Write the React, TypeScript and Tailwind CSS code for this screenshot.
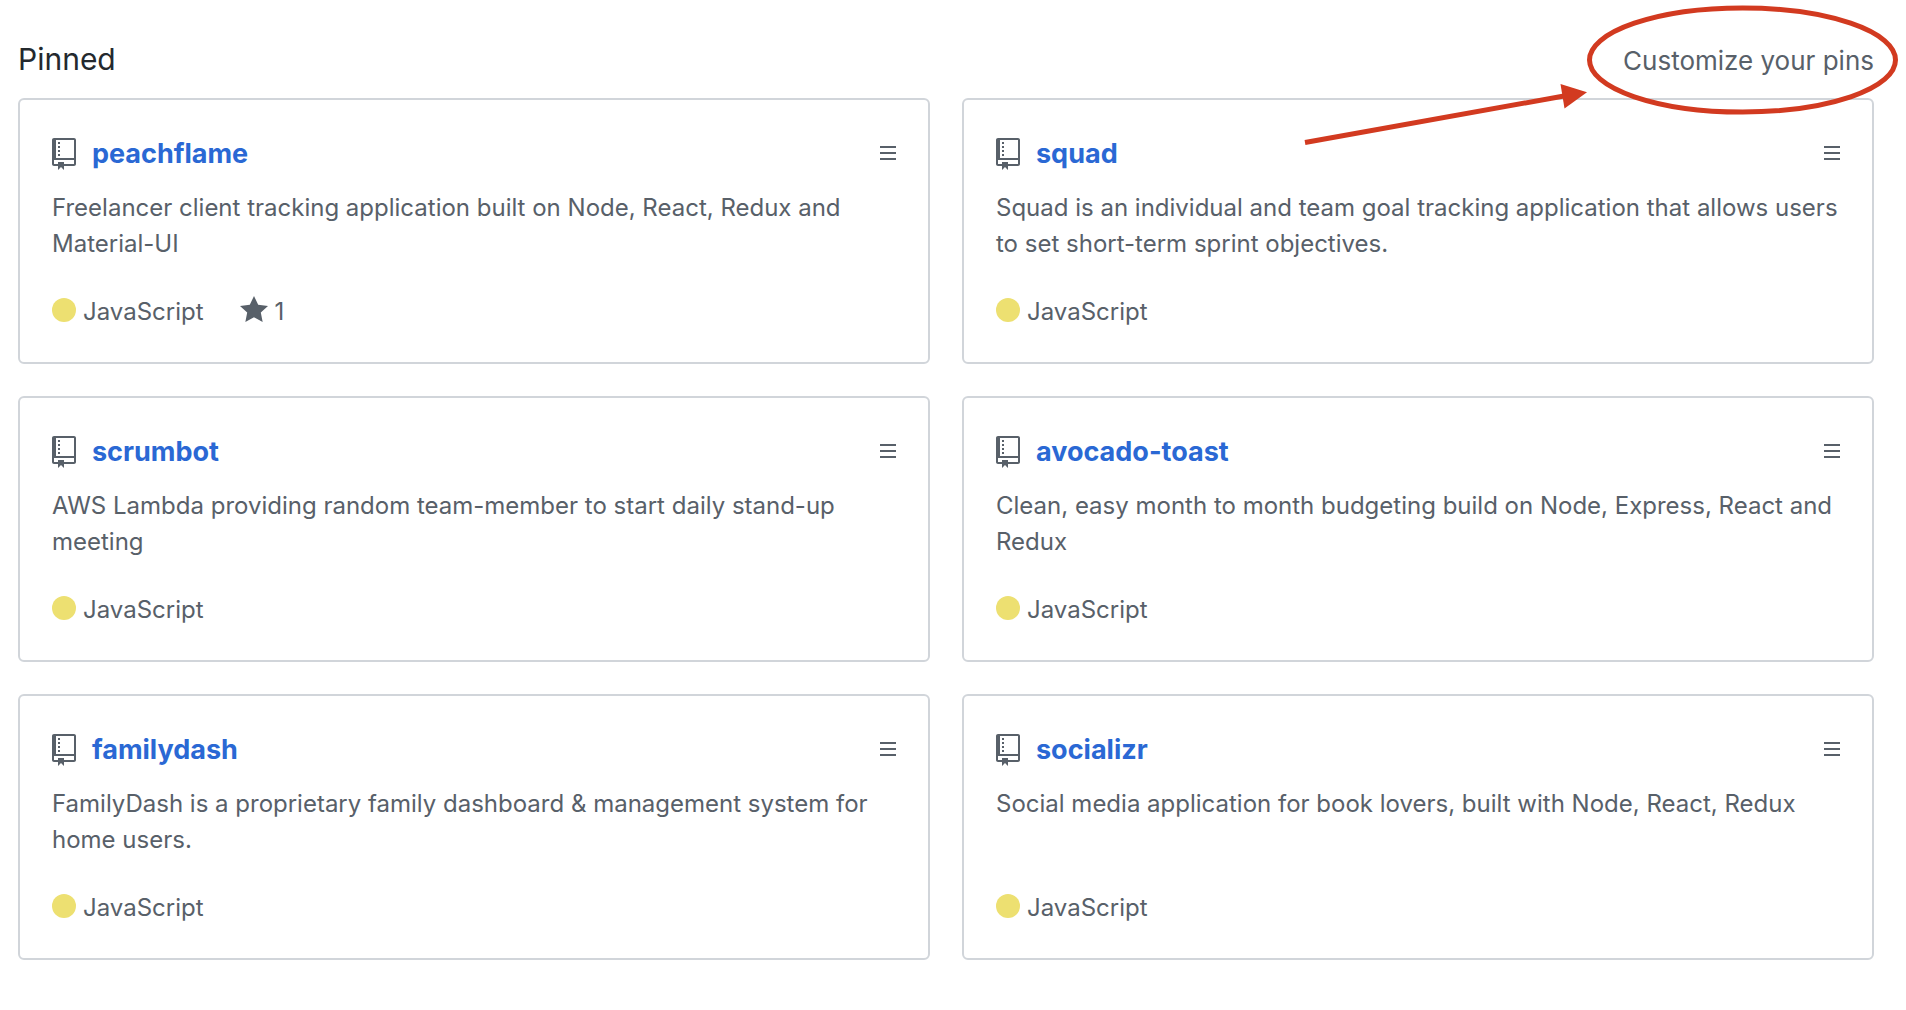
type Repo = {
  name: string;
  description: string;
  language: string;
  stars?: number;
};

const repos: Repo[] = [
  {
    name: "peachflame",
    description: "Freelancer client tracking application built on Node, React, Redux and Material-UI",
    language: "JavaScript",
    stars: 1,
  },
  {
    name: "squad",
    description:
      "Squad is an individual and team goal tracking application that allows users to set short-term sprint objectives.",
    language: "JavaScript",
  },
  {
    name: "scrumbot",
    description: "AWS Lambda providing random team-member to start daily stand-up meeting",
    language: "JavaScript",
  },
  {
    name: "avocado-toast",
    description: "Clean, easy month to month budgeting build on Node, Express, React and Redux",
    language: "JavaScript",
  },
  {
    name: "familydash",
    description: "FamilyDash is a proprietary family dashboard & management system for home users.",
    language: "JavaScript",
  },
  {
    name: "socializr",
    description: "Social media application for book lovers, built with Node, React, Redux",
    language: "JavaScript",
  },
];

function RepoIcon() {
  return (
    <svg viewBox="0 0 12 16" className="h-8 w-6 shrink-0 fill-current" aria-hidden="true">
      <path
        fillRule="evenodd"
        d="M4 9H3V8h1v1zm0-3H3v1h1V6zm0-2H3v1h1V4zm0-2H3v1h1V2zm8-1v12c0 .55-.45 1-1 1H6v2l-1.5-1.5L3 16v-2H1c-.55 0-1-.45-1-1V1c0-.55.45-1 1-1h10c.55 0 1 .45 1 1zm-1 10H1v2h2v-1h3v1h5v-2zm0-10H2v9h9V1z"
      />
    </svg>
  );
}

function StarIcon() {
  return (
    <svg viewBox="0 0 14 16" className="h-8 w-7 shrink-0 fill-current" aria-hidden="true">
      <path
        fillRule="evenodd"
        d="M14 6l-4.9-.64L7 1 4.9 5.36 0 6l3.6 3.26L2.67 14 7 11.67 11.33 14l-.93-4.74L14 6z"
      />
    </svg>
  );
}

function GrabberIcon() {
  return (
    <svg viewBox="0 0 8 16" className="h-8 w-4 fill-current" aria-hidden="true">
      <path fillRule="evenodd" d="M8 4v1H0V4h8zM0 8h8V7H0v1zm0 3h8v-1H0v1z" />
    </svg>
  );
}

function RepoCard({ repo }: { repo: Repo }) {
  return (
    <li className="flex flex-col rounded-md border-2 border-[#d1d5da] p-8">
      <div className="flex h-11 items-center">
        <RepoIcon />
        <a href={`#${repo.name}`} className="ml-4 text-[27px] leading-[44px] font-bold text-[#2a68d4]">
          {repo.name}
        </a>
        <button type="button" aria-label={`Reorder ${repo.name}`} className="ml-auto cursor-grab">
          <GrabberIcon />
        </button>
      </div>
      <p className="mt-3.5 mb-8 min-h-[72px] text-2xl leading-9">{repo.description}</p>
      <div className="mt-auto flex h-9 items-start text-2xl leading-9">
        <span className="mt-1 mr-[7px] size-6 rounded-full bg-[#ede071]" />
        <span>{repo.language}</span>
        {repo.stars !== undefined && (
          <a href={`#${repo.name}-stars`} className="ml-9 flex items-start gap-[7px]">
            <StarIcon />
            {repo.stars}
          </a>
        )}
      </div>
    </li>
  );
}

function Callout() {
  return (
    <svg
      viewBox="0 0 606 150"
      className="pointer-events-none absolute top-0 right-0 h-[150px] w-[606px]"
      aria-hidden="true"
    >
      <ellipse cx="442.5" cy="60" rx="153" ry="52" fill="none" stroke="#d23a20" strokeWidth="5" />
      <path d="M5 142.5L264 96" stroke="#d23a20" strokeWidth="5" />
      <path d="M260.5 84L287 92.3L264.5 108.5z" fill="#d23a20" />
    </svg>
  );
}

export default function App() {
  return (
    <main className="relative min-h-screen bg-white pt-9 pr-8 pb-12 pl-[18px] font-['Inter','Liberation_Sans',sans-serif] text-[#586069]">
      <header className="mb-3.5 flex h-12 items-baseline justify-between">
        <h2 className="text-[30px] leading-[46px] text-[#24292e]">Pinned</h2>
        <button type="button" className="cursor-pointer text-[26px] leading-9">
          Customize your pins
        </button>
      </header>
      <ol className="grid grid-cols-2 gap-8">
        {repos.map((repo) => (
          <RepoCard key={repo.name} repo={repo} />
        ))}
      </ol>
      <Callout />
    </main>
  );
}
